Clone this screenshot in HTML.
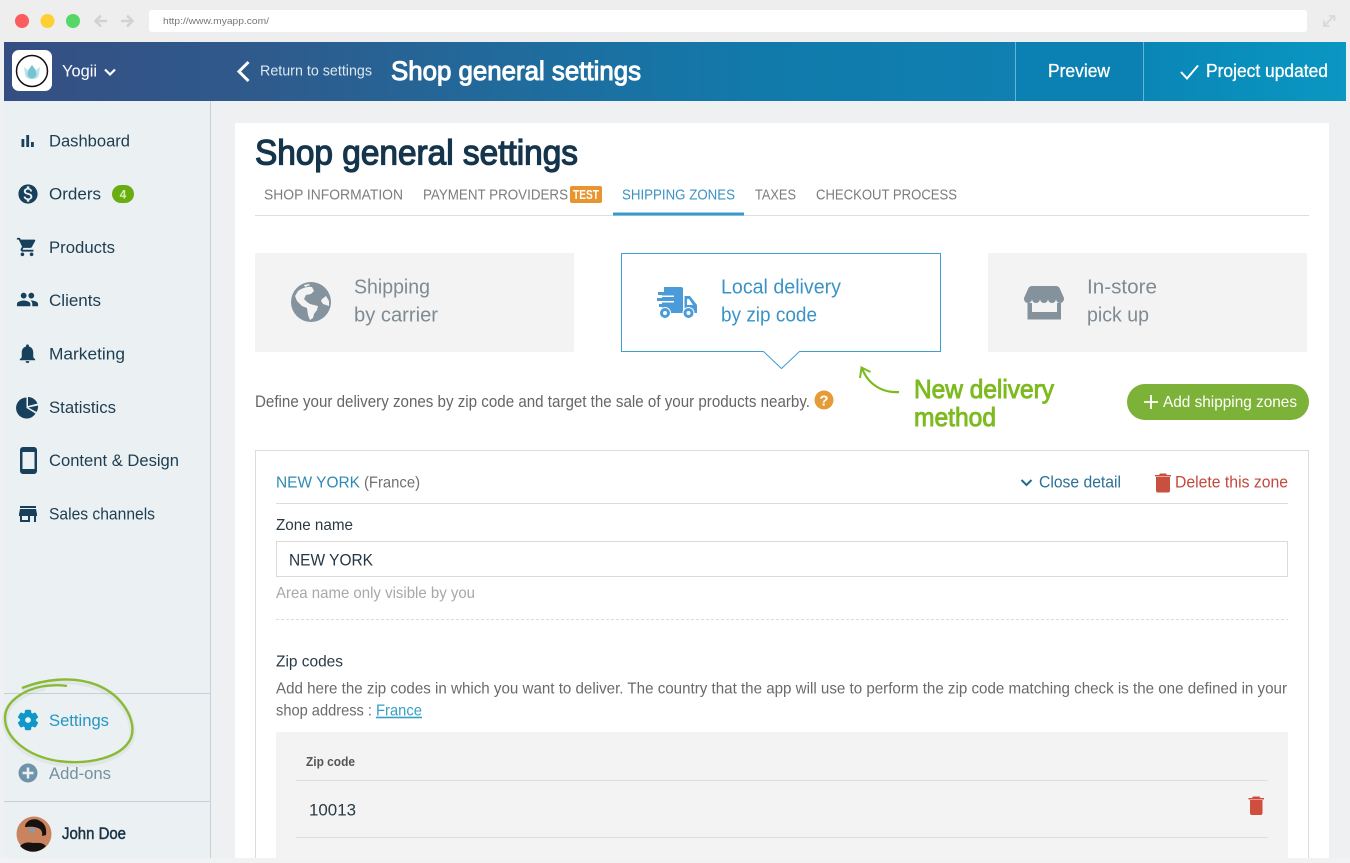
<!DOCTYPE html>
<html><head><meta charset="utf-8"><title>Shop general settings</title>
<style>
html,body{margin:0;padding:0;background:#eef0f1;width:1350px;height:863px;overflow:hidden}
svg{display:block}
text{font-family:"Liberation Sans",Arial,sans-serif;white-space:pre}
</style></head><body>
<svg xmlns="http://www.w3.org/2000/svg" width="1350" height="863" viewBox="0 0 1350 863">
<defs>
<linearGradient id="hd" x1="0" x2="1" y1="0" y2="0">
<stop offset="0" stop-color="#354e82"/><stop offset=".25" stop-color="#2f5a8c"/><stop offset=".55" stop-color="#1d6e9f"/><stop offset=".75" stop-color="#117aab"/><stop offset="1" stop-color="#0f80b1"/>
</linearGradient>
<linearGradient id="hd2" x1="0" x2="1" y1="0" y2="0"><stop offset="0" stop-color="#0a86b6"/><stop offset="1" stop-color="#0a97c2"/></linearGradient>
</defs>
<rect width="1350" height="863" fill="#eef0f1"/>
<rect width="1350" height="42" fill="#eeeeee"/>
<circle cx="22" cy="21" r="7" fill="#fb5c5e"/><circle cx="47.5" cy="21" r="7" fill="#fdcf32"/><circle cx="73" cy="21" r="7" fill="#56d768"/>
<path d="M107 21H96M101 15.5L95.5 21l5.500 5.500" fill="none" stroke="#d2d2d2" stroke-width="2.6"/>
<path d="M121 21h11M127 15.5l5.500 5.500-5.500 5.500" fill="none" stroke="#d2d2d2" stroke-width="2.6"/>
<rect x="149" y="10" width="1158" height="22" rx="3" fill="#fff"/>
<text x="163" y="24" font-size="9.5" fill="#777" textLength="106" lengthAdjust="spacingAndGlyphs">http://www.myapp.com/</text>
<path d="M1324 26l10-10M1329 16h5.500v5M1324 20.5V26h5.500" fill="none" stroke="#d8d8d8" stroke-width="1.8"/>

<!-- header -->
<rect x="4" y="42" width="1011" height="59" fill="url(#hd)"/>
<rect x="1015" y="42" width="128" height="59" fill="#0b81b3"/>
<rect x="1143" y="42" width="203" height="59" fill="url(#hd2)"/>
<rect x="1015" y="42" width="1" height="59" fill="#63b5d8"/><rect x="1143" y="42" width="1" height="59" fill="#63b5d8"/>
<rect x="12" y="50" width="40" height="41" rx="7" fill="#fff"/>
<circle cx="32" cy="71" r="15.5" fill="#fff" stroke="#111" stroke-width="1.5"/>
<path d="M24 67l4 3 4-5 4 5 4-3-1 8c-1 3-3 4-7 4s-6-1-7-4z" fill="#bfe3e6"/>
<path d="M32 65c2 3 4.500 6 4.500 9a4.500 4.500 0 0 1-9 0c0-3 2.500-6 4.500-9z" fill="#74c4d0"/>
<text x="62" y="76.5" font-size="17" fill="#fff" textLength="35" lengthAdjust="spacingAndGlyphs">Yogii</text>
<path d="M105 69.5l5 5 5-5" fill="none" stroke="#fff" stroke-width="2.2"/>
<path d="M248.5 62L239 71.5l9.500 9.500" fill="none" stroke="#fff" stroke-width="3"/>
<text x="260" y="75.5" font-size="15" fill="#dbe8f0" textLength="112" lengthAdjust="spacingAndGlyphs">Return to settings</text>
<text x="391" y="80" font-size="27" fill="#fff" stroke="#fff" stroke-width="1" textLength="250" lengthAdjust="spacingAndGlyphs">Shop general settings</text>
<text x="1048" y="77" font-size="18" fill="#fff" stroke="#fff" stroke-width=".3" textLength="62" lengthAdjust="spacingAndGlyphs">Preview</text>
<path d="M1181 72l6 6.500 11-13" fill="none" stroke="#fff" stroke-width="2"/>
<text x="1206" y="77" font-size="18" fill="#fff" stroke="#fff" stroke-width=".3" textLength="122" lengthAdjust="spacingAndGlyphs">Project updated</text>

<!-- sidebar -->
<rect x="4" y="101" width="206" height="757" fill="#ebf0f2"/>
<rect x="210" y="101" width="1" height="757" fill="#c6d1d7"/>
<g fill="#16405c">
<path d="M21.500 139h2.800v8h-2.800zM26.300 135h2.800v12h-2.800zM31 142h2.800v5H31z"/>
<svg x="16.5" y="182.5" width="23" height="23" viewBox="0 0 24 24"><path d="M12 2C6.480 2 2 6.480 2 12s4.480 10 10 10 10-4.480 10-10S17.520 2 12 2zm1.410 16.090V20h-2.670v-1.930c-1.710-.36-3.160-1.460-3.270-3.400h1.960c.1 1.050.82 1.870 2.650 1.870 1.960 0 2.400-.98 2.400-1.590 0-.83-.44-1.610-2.670-2.140-2.480-.6-4.180-1.620-4.180-3.670 0-1.720 1.390-2.840 3.110-3.210V4h2.670v1.950c1.860.45 2.790 1.860 2.850 3.390H14.300c-.05-1.110-.64-1.870-2.220-1.870-1.500 0-2.400.68-2.400 1.640 0 .84.650 1.390 2.670 1.910s4.180 1.390 4.180 3.910c-.01 1.830-1.380 2.830-3.120 3.160z"/></svg>
<svg x="16" y="236" width="22" height="22" viewBox="0 0 24 24"><path d="M7 18c-1.100 0-1.990.9-1.990 2S5.900 22 7 22s2-.9 2-2-.9-2-2-2zM1 2v2h2l3.600 7.590-1.350 2.450c-.16.28-.25.61-.25.96 0 1.100.9 2 2 2h12v-2H7.420c-.14 0-.25-.11-.25-.25l.03-.12.9-1.630h7.450c.75 0 1.410-.41 1.750-1.030l3.580-6.490c.08-.14.12-.31.12-.48 0-.55-.45-1-1-1H5.210l-.94-2H1zm16 16c-1.100 0-1.990.9-1.990 2s.89 2 1.990 2 2-.9 2-2-.9-2-2-2z"/></svg>
<svg x="16" y="288" width="23" height="23" viewBox="0 0 24 24"><path d="M16 11c1.660 0 2.990-1.340 2.990-3S17.660 5 16 5c-1.660 0-3 1.340-3 3s1.340 3 3 3zm-8 0c1.660 0 2.990-1.340 2.990-3S9.660 5 8 5C6.340 5 5 6.340 5 8s1.340 3 3 3zm0 2c-2.330 0-7 1.170-7 3.500V19h14v-2.500c0-2.330-4.670-3.500-7-3.500zm8 0c-.29 0-.62.02-.97.05 1.160.84 1.970 1.970 1.970 3.450V19h6v-2.500c0-2.330-4.670-3.500-7-3.500z"/></svg>
<svg x="16" y="342" width="23" height="23" viewBox="0 0 24 24"><path d="M12 22c1.100 0 2-.9 2-2h-4c0 1.100.89 2 2 2zm6-6v-5c0-3.070-1.640-5.640-4.500-6.320V4c0-.83-.67-1.500-1.500-1.500s-1.500.67-1.500 1.500v.68C7.630 5.360 6 7.920 6 11v5l-2 2v1h16v-1l-2-2z"/></svg>
<path d="M26.500 397.500v10.500l9 5.500a10.500 10.500 0 1 1-9-16z"/><path d="M28 397a10.500 10.500 0 0 1 9.500 6.500L28 406z"/><path d="M28.500 407.500l9.500-2a10.500 10.500 0 0 1-1.500 6.500z"/>
<path fill-rule="evenodd" d="M23 447h11a3 3 0 0 1 3 3v21a3 3 0 0 1-3 3H23a3 3 0 0 1-3-3v-21a3 3 0 0 1 3-3zm-.5 5v17h12v-17z"/>
<svg x="16" y="502" width="24" height="24" viewBox="0 0 24 24"><path d="M20 4H4v2h16V4zm1 10v-2l-1-5H4l-1 5v2h1v6h10v-6h4v6h2v-6h1zm-9 4H6v-4h6v4z"/></svg>
</g>
<g font-size="17" fill="#1d3d52">
<text x="49" y="146.3" textLength="81" lengthAdjust="spacingAndGlyphs">Dashboard</text>
<text x="49" y="199.5" textLength="52" lengthAdjust="spacingAndGlyphs">Orders</text>
<text x="49" y="252.8" textLength="66" lengthAdjust="spacingAndGlyphs">Products</text>
<text x="49" y="306" textLength="52" lengthAdjust="spacingAndGlyphs">Clients</text>
<text x="49" y="359.5" textLength="76" lengthAdjust="spacingAndGlyphs">Marketing</text>
<text x="49" y="412.8" textLength="67" lengthAdjust="spacingAndGlyphs">Statistics</text>
<text x="49" y="466" textLength="130" lengthAdjust="spacingAndGlyphs">Content &amp; Design</text>
<text x="49" y="519.5" textLength="106" lengthAdjust="spacingAndGlyphs">Sales channels</text>
</g>
<rect x="112" y="185" width="22" height="18" rx="9" fill="#6aad12"/>
<text x="123" y="198.5" font-size="12" font-weight="bold" fill="#d9f0b8" text-anchor="middle">4</text>
<rect x="4" y="693" width="206" height="1" fill="#c6d1d7"/>
<rect x="4" y="801" width="206" height="1" fill="#c6d1d7"/>
<svg x="16" y="708" width="24" height="24" viewBox="0 0 24 24"><path fill="#0e97c9" stroke="#0e97c9" stroke-width="1.4" d="M19.140 12.940c.04-.3.06-.61.06-.94 0-.32-.02-.64-.07-.94l2.030-1.580a.49.49 0 0 0 .12-.61l-1.920-3.320a.488.488 0 0 0-.59-.22l-2.390.96c-.5-.38-1.030-.7-1.620-.94l-.36-2.540a.484.484 0 0 0-.48-.41h-3.840c-.24 0-.43.17-.47.41l-.36 2.540c-.59.24-1.130.57-1.620.94l-2.390-.96c-.22-.08-.47 0-.59.22L2.740 8.870c-.12.21-.08.47.12.61l2.030 1.580c-.05.3-.09.63-.09.94s.02.64.07.94l-2.030 1.580a.49.49 0 0 0-.12.61l1.920 3.320c.12.22.37.29.59.22l2.390-.96c.5.38 1.030.7 1.620.94l.36 2.540c.05.24.24.41.48.41h3.840c.24 0 .44-.17.47-.41l.36-2.540c.59-.24 1.130-.56 1.620-.94l2.390.96c.22.08.47 0 .59-.22l1.920-3.320c.12-.22.07-.47-.12-.61l-2.010-1.580zM12 15.600c-1.980 0-3.600-1.620-3.600-3.600s1.620-3.600 3.600-3.600 3.600 1.620 3.600 3.600-1.620 3.600-3.600 3.600z"/></svg>
<text x="49" y="726" font-size="17" fill="#2496c3" textLength="60" lengthAdjust="spacingAndGlyphs">Settings</text>
<circle cx="28" cy="773" r="9.5" fill="#6f94aa"/><path d="M28 767.5v11M22.5 773h11" stroke="#ebf0f2" stroke-width="2.5"/>
<text x="49" y="779" font-size="17" fill="#76909f" textLength="62" lengthAdjust="spacingAndGlyphs">Add-ons</text>
<path d="M22 690C42 682 72 677 97 687C124 698 137 724 131 740C122 760 88 767 58 763C26 758 5 739 5 720C5 703 25 691 45 688" fill="none" stroke="#000" stroke-opacity=".04" stroke-width="6"/>
<path d="M22 688C42 680 72 675 97 685C124 696 137 722 131 738C122 758 88 765 58 761C26 756 5 737 5 718C5 701 25 689 45 686C53 685 62 685 67 686" fill="none" stroke="#8aba35" stroke-width="2.4"/>
<circle cx="34" cy="834" r="17.5" fill="#c9835f"/>
<path d="M25 827c0-7 10-10 15-6 4 2 7 6 6 14l-4 1c1-4-1-7-4-8-5-2-10-1-13-1z" fill="#17120f"/>
<path d="M20 846c4-4 9-4 13-3 5 0 9-1 13 3a17.500 17.500 0 0 1-26 0z" fill="#17120f"/>
<circle cx="32" cy="830" r="3" fill="#8a9aaa"/>
<text x="62" y="839" font-size="16.5" fill="#1b3345" stroke="#1b3345" stroke-width=".5" textLength="64" lengthAdjust="spacingAndGlyphs">John Doe</text>

<!-- main card -->
<rect x="235" y="123" width="1094" height="735" fill="#fff"/>
<text x="255" y="164.5" font-size="35.5" fill="#15354c" stroke="#15354c" stroke-width="1.3" textLength="323" lengthAdjust="spacingAndGlyphs">Shop general settings</text>
<g font-size="14.5" fill="#7c7c7c">
<text x="264" y="199.5" textLength="139" lengthAdjust="spacingAndGlyphs">SHOP INFORMATION</text>
<text x="423" y="199.5" textLength="145" lengthAdjust="spacingAndGlyphs">PAYMENT PROVIDERS</text>
<text x="622" y="199.5" fill="#3a93c2" textLength="113" lengthAdjust="spacingAndGlyphs">SHIPPING ZONES</text>
<text x="755" y="199.5" textLength="41" lengthAdjust="spacingAndGlyphs">TAXES</text>
<text x="816" y="199.5" textLength="141" lengthAdjust="spacingAndGlyphs">CHECKOUT PROCESS</text>
</g>
<rect x="570" y="186" width="32" height="17" rx="2" fill="#e8952f"/>
<text x="573" y="199" font-size="12.5" font-weight="bold" fill="#fff" textLength="26" lengthAdjust="spacingAndGlyphs">TEST</text>
<rect x="255" y="215" width="1054" height="1" fill="#dcdfe0"/>
<rect x="613" y="212.5" width="131" height="3" fill="#3a99cc"/>

<!-- option cards -->
<rect x="255" y="253" width="319" height="99" rx="1" fill="#f3f3f3"/>
<rect x="988" y="253" width="319" height="99" rx="1" fill="#f3f3f3"/>
<path d="M621.500 253.500h319v98h-141l-18 17-18-17h-142z" fill="#fff" stroke="#3f9fd1" stroke-width="1"/>
<circle cx="311" cy="302" r="20" fill="#84939d"/>
<path fill="#f3f3f3" d="M298 291c4-3 10-5 14-4l2 4-3 3-5 1-2 4 3 3 3 2 8 2-1 4-3 4-1 4-3 2-2-5-1-7-5-2-5-5-2-5zM322 299l4-3 3 5 0 5-3-1-3-1-2-3zM304 285l5-1 1 1-5 2z"/>
<g font-size="20.5" fill="#7f8b93">
<text x="354" y="293.5" textLength="76" lengthAdjust="spacingAndGlyphs">Shipping</text>
<text x="354" y="321.5" textLength="84" lengthAdjust="spacingAndGlyphs">by carrier</text>
<text x="1087" y="293.5" textLength="70" lengthAdjust="spacingAndGlyphs">In-store</text>
<text x="1087" y="321.5" textLength="62" lengthAdjust="spacingAndGlyphs">pick up</text>
<text x="721" y="293.5" fill="#3a93c8" textLength="120" lengthAdjust="spacingAndGlyphs">Local delivery</text>
<text x="721" y="321.5" fill="#3a93c8" textLength="96" lengthAdjust="spacingAndGlyphs">by zip code</text>
</g>
<!-- truck -->
<path fill="#4a9bd8" d="M664 287h17a2 2 0 0 1 2 2v24h-21v-6h-3v-3h3v-9h-4v-3h6z"/>
<path fill="#4a9bd8" d="M657 298h8v3h-8z"/>
<path fill="#fff" d="M656 295.500h18v1.500h-18zM656 301h18v1.500h-18z"/>
<path fill="#4a9bd8" fill-rule="evenodd" d="M684.500 296h5.500l7 9v8h-12.500zM687 299v6h6l-4-6z"/>
<circle cx="665" cy="313" r="5.5" fill="#4a9bd8" stroke="#fff" stroke-width="1"/><circle cx="665" cy="313" r="2" fill="#fff"/>
<circle cx="688.500" cy="313" r="5.500" fill="#4a9bd8" stroke="#fff" stroke-width="1"/><circle cx="688.500" cy="313" r="2" fill="#fff"/>
<!-- store -->
<path fill="#84929b" d="M1032 286h24q3 0 4 3l4 9v1a4 4 0 0 1-8 0a4 4 0 0 1-8 0a4 4 0 0 1-8 0a4 4 0 0 1-8 0a4 4 0 0 1-8 0v-1l4-9q1-3 4-3z"/>
<path fill="#84929b" d="M1027.500 303h4.500v9h25v-9h4v7.500h0v9h-33.500z"/>
<text x="255" y="407" font-size="16.5" fill="#666" textLength="555" lengthAdjust="spacingAndGlyphs">Define your delivery zones by zip code and target the sale of your products nearby.</text>
<circle cx="824" cy="400" r="9.5" fill="#e59c38"/>
<text x="824" y="405.5" font-size="15" font-weight="bold" fill="#fff" text-anchor="middle">?</text>
<path d="M899 392c-16 1-31-7-37-24" fill="none" stroke="#7dba1f" stroke-width="2.2"/>
<path d="M860 378l1.500-10.500 9 4.500" fill="none" stroke="#7dba1f" stroke-width="2"/>
<text x="914" y="398" font-size="26" fill="#7dba1f" stroke="#7dba1f" stroke-width=".9" textLength="140" lengthAdjust="spacingAndGlyphs">New delivery</text>
<text x="914" y="426" font-size="26" fill="#7dba1f" stroke="#7dba1f" stroke-width=".9" textLength="82" lengthAdjust="spacingAndGlyphs">method</text>
<rect x="1127" y="384" width="182" height="36" rx="18" fill="#7db238"/>
<path d="M1151 395v14M1144 402h14" stroke="#fff" stroke-width="1.8"/>
<text x="1163" y="407" font-size="16" fill="#fff" textLength="134" lengthAdjust="spacingAndGlyphs">Add shipping zones</text>

<!-- zone -->
<path d="M255.500 858V450.500h1053V858" fill="none" stroke="#dcdcdc"/>
<text x="276" y="487.5" font-size="16" fill="#2d8ab5" textLength="84" lengthAdjust="spacingAndGlyphs">NEW YORK</text>
<text x="364" y="487.5" font-size="16" fill="#707070" textLength="56" lengthAdjust="spacingAndGlyphs">(France)</text>
<path d="M1021.500 480l5 5 5-5" fill="none" stroke="#25698f" stroke-width="2"/>
<text x="1039" y="487.5" font-size="16.5" fill="#2b7196" textLength="82" lengthAdjust="spacingAndGlyphs">Close detail</text>
<path fill="#c9503f" d="M1156 477h14v13.500a2 2 0 0 1-2 2h-10a2 2 0 0 1-2-2zM1155 475h4l1-1.500h6l1 1.500h4v1.500h-16z"/>
<text x="1175" y="487.5" font-size="16.5" fill="#c5473c" textLength="113" lengthAdjust="spacingAndGlyphs">Delete this zone</text>
<rect x="276" y="503" width="1012" height="1" fill="#dcdcdc"/>
<text x="276" y="530" font-size="16" fill="#2a3a45" textLength="77" lengthAdjust="spacingAndGlyphs">Zone name</text>
<rect x="276.500" y="541.500" width="1011" height="35" fill="#fff" stroke="#dadada"/>
<text x="289" y="565.3" font-size="16.5" fill="#243644" textLength="84" lengthAdjust="spacingAndGlyphs">NEW YORK</text>
<text x="276" y="598" font-size="16" fill="#a8a8a8" textLength="199" lengthAdjust="spacingAndGlyphs">Area name only visible by you</text>
<path d="M276 619.500h1012" stroke="#dcdcdc" stroke-dasharray="3 2"/>
<text x="276" y="666.3" font-size="16" fill="#2a3a45" textLength="67" lengthAdjust="spacingAndGlyphs">Zip codes</text>
<text x="276" y="693.7" font-size="16" fill="#6a6a6a" textLength="1011" lengthAdjust="spacingAndGlyphs">Add here the zip codes in which you want to deliver. The country that the app will use to perform the zip code matching check is the one defined in your</text>
<text x="276" y="715.7" font-size="16" fill="#6a6a6a" textLength="96" lengthAdjust="spacingAndGlyphs">shop address :</text>
<text x="376" y="715.7" font-size="16" fill="#37a0c4" text-decoration="underline" textLength="46" lengthAdjust="spacingAndGlyphs">France</text>
<rect x="276" y="732" width="1012" height="126" fill="#f3f3f3"/>
<text x="306" y="766" font-size="12.5" font-weight="bold" fill="#555" textLength="49" lengthAdjust="spacingAndGlyphs">Zip code</text>
<rect x="296" y="780" width="972" height="1" fill="#dedede"/>
<text x="309" y="815.7" font-size="16.5" fill="#2a3a45" textLength="47" lengthAdjust="spacingAndGlyphs">10013</text>
<path fill="#cf4e3d" d="M1250 800h12.500v13a2 2 0 0 1-2 2h-8.500a2 2 0 0 1-2-2zM1248.500 798h3.500l1-1.500h6.500l1 1.500h3.500v1.500h-15.500z"/>
<rect x="296" y="837" width="972" height="1" fill="#dedede"/>
<rect x="0" y="858" width="1350" height="5" fill="#f1f2f3"/>
</svg>
</body></html>
